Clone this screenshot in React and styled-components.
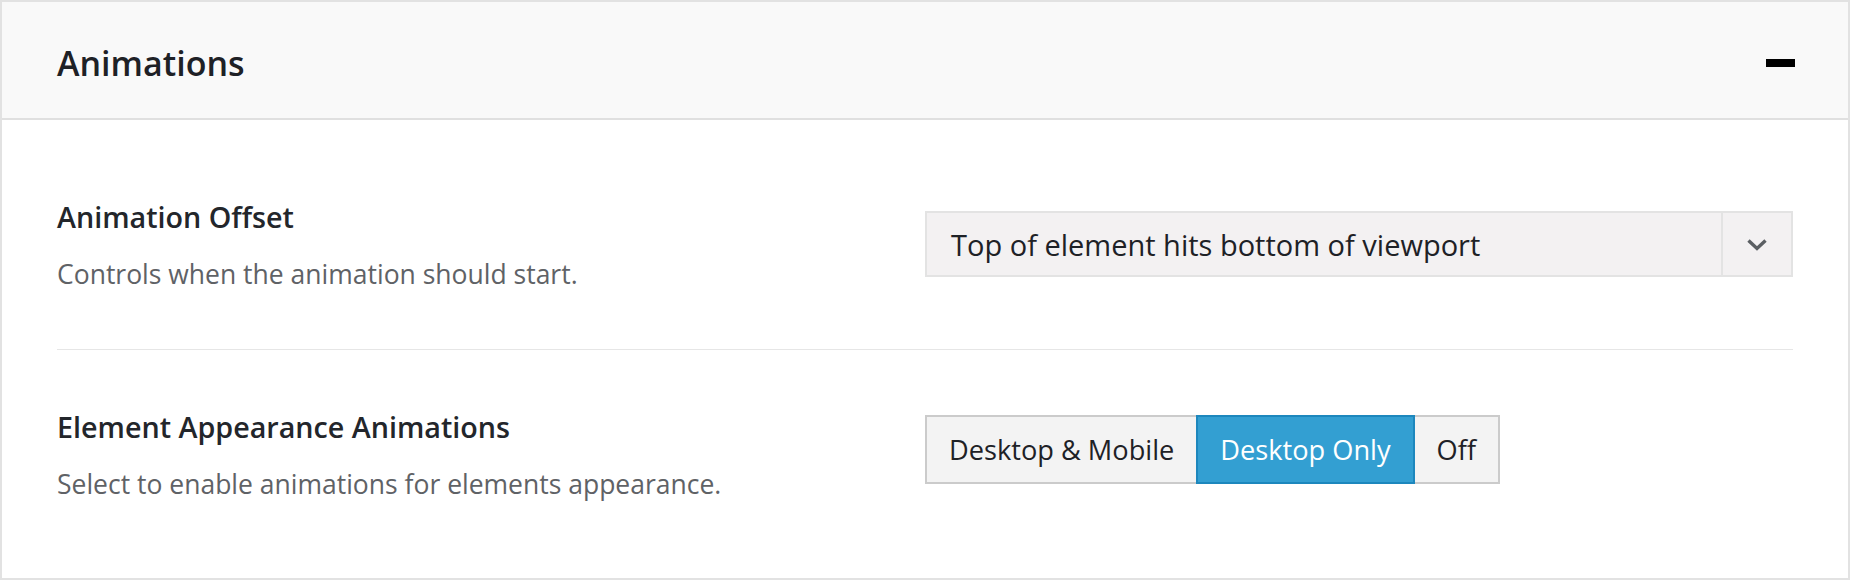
import React from "react";
import styled, { createGlobalStyle } from "styled-components";

const Global = createGlobalStyle`
  * { box-sizing: border-box; }
  html, body { margin: 0; padding: 0; background: #fff; }
  body { font-family: "Open Sans", "Noto Sans", sans-serif; }
`;

const Panel = styled.section`
  width: 1850px;
  height: 580px;
  border: 2px solid #e2e2e2;
  background: #fff;
  display: flex;
  flex-direction: column;
`;

const Header = styled.header`
  height: 118px;
  flex: none;
  background: #f9f9f9;
  border-bottom: 2px solid #e0e0e0;
  display: flex;
  align-items: center;
  justify-content: space-between;
  padding: 5px 53px 0 55px;
`;

const Title = styled.h2`
  margin: 0;
  font-size: 34px;
  font-weight: 600;
  color: #1e2126;
  line-height: 1;
`;

const Minus = styled.span`
  display: block;
  width: 29px;
  height: 8px;
  background: #000;
`;

const Body = styled.div`
  padding: 20px 55px;
  display: flex;
  flex-direction: column;
`;

const Row = styled.div`
  display: grid;
  grid-template-columns: 1fr 868px;
  align-items: start;
  padding: 57px 0 56px;
  & + & {
    border-top: 1px solid #e6e6e6;
  }
`;

const Label = styled.div`
  display: flex;
  flex-direction: column;
  gap: 18px;
`;

const Name = styled.div`
  font-size: 28.7px;
  font-weight: 600;
  color: #23262b;
  line-height: 40px;
`;

const Desc = styled.div`
  font-size: 26.5px;
  color: #5f6266;
  line-height: 38px;
`;

const Select = styled.div`
  margin-top: 14px;
  height: 66px;
  display: flex;
  border: 2px solid #e3e3e3;
  background: #f3f1f2;
`;

const SelectValue = styled.div`
  flex: 1;
  display: flex;
  align-items: center;
  padding-left: 24px;
  font-size: 29px;
  color: #1e2126;
`;

const Caret = styled.div`
  width: 70px;
  flex: none;
  border-left: 2px solid #e3e3e3;
  display: flex;
  align-items: center;
  justify-content: center;
`;

const Group = styled.div`
  margin-top: 8px;
  display: flex;
`;

const Option = styled.button`
  height: 69px;
  padding: 0 22px;
  margin-left: -2px;
  font-family: inherit;
  font-size: 27.2px;
  border: 2px solid ${(p) => (p.$active ? "#1d87bd" : "#cbcbcb")};
  background: ${(p) => (p.$active ? "#339fd2" : "#f3f3f3")};
  color: ${(p) => (p.$active ? "#fff" : "#1e2126")};
  position: relative;
  z-index: ${(p) => (p.$active ? 1 : 0)};
  &:first-child { margin-left: 0; }
`;

export default function App() {
  return (
    <>
      <Global />
      <Panel>
        <Header>
          <Title>Animations</Title>
          <Minus />
        </Header>
        <Body>
          <Row>
            <Label>
              <Name>Animation Offset</Name>
              <Desc>Controls when the animation should start.</Desc>
            </Label>
            <Select>
              <SelectValue>Top of element hits bottom of viewport</SelectValue>
              <Caret>
                <svg width="22" height="13" viewBox="0 0 22 13">
                  <path d="M2.5 2.5 L11 10.5 L19.5 2.5" fill="none" stroke="#5b5f63" strokeWidth="3.4" />
                </svg>
              </Caret>
            </Select>
          </Row>
          <Row>
            <Label>
              <Name>Element Appearance Animations</Name>
              <Desc>Select to enable animations for elements appearance.</Desc>
            </Label>
            <Group>
              <Option>Desktop &amp; Mobile</Option>
              <Option $active>Desktop Only</Option>
              <Option>Off</Option>
            </Group>
          </Row>
        </Body>
      </Panel>
    </>
  );
}
